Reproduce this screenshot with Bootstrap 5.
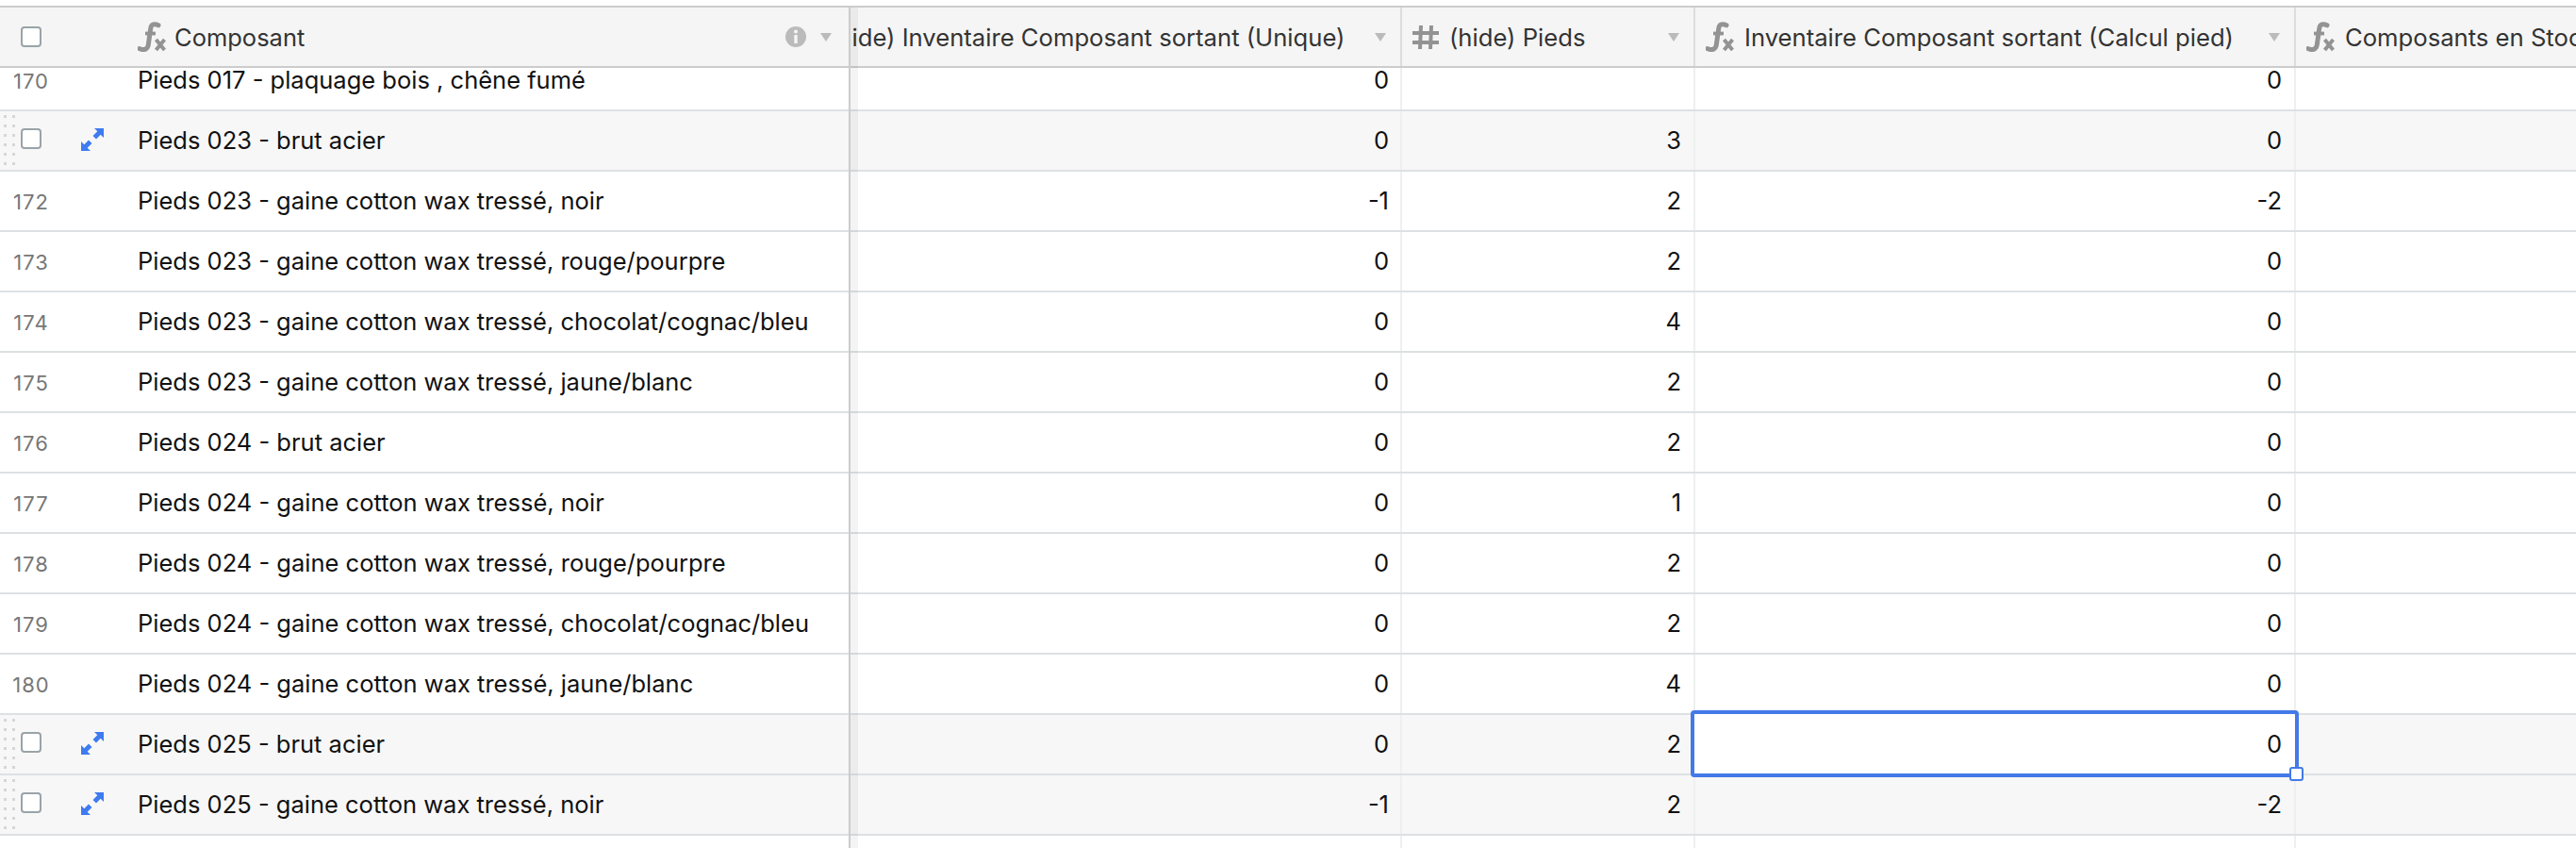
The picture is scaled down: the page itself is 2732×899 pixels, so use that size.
<!DOCTYPE html>
<html lang="fr">
<head>
<meta charset="utf-8">
<title>Composants</title>
<link rel="stylesheet" href="https://cdn.jsdelivr.net/npm/bootstrap@5.3.0/dist/css/bootstrap.min.css">
<style>
html,body{height:100%;margin:0;background:#fff;overflow:hidden}
body{font-family:Inter,"Liberation Sans",sans-serif;font-size:25.5px;color:#111}
.gt-root{height:899px;padding-top:6px}
.gt-left{width:902px;border-right:2px solid #ccc;z-index:3}
.gt-left::after{content:"";position:absolute;left:100%;top:2px;bottom:0;width:8px;background:rgba(0,0,0,.045);margin-left:2px}
.gt-right{width:1830px}
.gt-right .gt-head{font-size:25.65px}
.gt-head{height:66px;background:#f5f5f5;border-top:2px solid #ccc;border-bottom:2px solid #ccc;color:#333;white-space:nowrap}
.gt-scroll{height:827px}
.gt-row{height:64px;border-bottom:2px solid #dde1e3;white-space:nowrap}
.gt-row:first-child{margin-top:-18px}
.gt-hot{background:#f7f7f7}
.gt-num{width:66px;color:#777;font-size:22px;letter-spacing:1px;padding-top:2px}
.gt-exp{width:64px}
.gt-label{padding-left:16px;padding-top:1px}
.gt-head .gt-label{padding-top:0}
.gt-head .gt-num{padding-top:0}
.gt-head span{padding-top:3px}
.gt-drag{position:absolute;left:4px;top:4px}
.gt-left .form-check-input{width:22px;height:22px;margin:0;border:2px solid #9aa3a8;border-radius:4px;background-color:#fff}
.gt-hot .form-check-input{margin-bottom:6px}
.gt-hot .gt-exp svg{margin-bottom:2px}
.gt-inner{margin-left:-35px}
.gt-a{width:620px}.gt-b{width:311px}.gt-c{width:637px}.gt-d{width:400px}
.gt-cell{border-right:2px solid #eef0f0;padding-right:13px;padding-top:1px;height:100%}
.gt-a.gt-cell{padding-right:12px}
.gt-hcell{border-right:2px solid #ddd;padding-left:11px;padding-right:15px;height:100%}
.gt-a.gt-hcell{padding-left:12px}
.gt-d.gt-hcell,.gt-d.gt-cell{border-right:0}
.gt-text{padding-left:11px}
.gt-left .gt-text{padding-left:9px}
.gt-caret{margin-left:auto}
.gt-sel{position:absolute;left:-5px;right:-5px;top:-5px;bottom:-4px;border:4px solid #4379e8;border-radius:4px;background:#fff;padding-right:14px;padding-top:1px}
.gt-handle{position:absolute;right:-9px;bottom:-8px;width:15px;height:15px;background:#fff;border:2px solid #4379e8;border-radius:3px}
.gt-sel-cell{z-index:2}
</style>
</head>
<body>
<div class="gt-root d-flex overflow-hidden">

  <div class="gt-left position-relative flex-shrink-0">
    <div class="gt-head d-flex align-items-center">
      <div class="gt-num d-flex justify-content-center flex-shrink-0"><input class="form-check-input" type="checkbox" aria-label="Tout"></div>
      <div class="gt-exp flex-shrink-0"></div>
      <div class="gt-label d-flex align-items-center flex-grow-1">
        <svg width="30" height="32" viewBox="0 0 30 32" fill="none" stroke="#939393"><path d="M22 3.800C17 1.500 14.300 3 13.700 7.500L11.300 24.500C10.700 29 7 31 1.800 28.500" stroke-width="5" stroke-linecap="round"/><path d="M8 12.500H19" stroke-width="3.800"/><path d="M19.500 19L28.500 30M28.500 19L19.500 30" stroke-width="4"/></svg>
        <span class="gt-text">Composant</span>
        <svg class="gt-caret" width="22" height="22" viewBox="0 0 22 22"><circle cx="11" cy="11" r="11" fill="#bbb"/><circle cx="11" cy="5.500" r="2" fill="#f5f5f5"/><rect x="9.300" y="9" width="3.400" height="9" fill="#f5f5f5"/></svg>
        <svg class="gt-drop" width="12" height="9" viewBox="0 0 12 9" style="margin:0 18px 0 15px"><path d="M0 0H12L6 9Z" fill="#bbb"/></svg>
      </div>
    </div>
    <div class="gt-scroll overflow-hidden">
      <div class="gt-row d-flex align-items-center"><div class="gt-num text-center">170</div><div class="gt-exp"></div><div class="gt-label">Pieds 017 - plaquage bois , chêne fumé</div></div>
      <div class="gt-row gt-hot d-flex align-items-center position-relative">
        <svg class="gt-drag" width="12" height="53" viewBox="0 0 12 53" fill="#d6d6d6"><path d="M0 0h3v3H0zM9 0h3v3H9zM0 10h3v3H0zM9 10h3v3H9zM0 20h3v3H0zM9 20h3v3H9zM0 30h3v3H0zM9 30h3v3H9zM0 40h3v3H0zM9 40h3v3H9zM0 50h3v3H0zM9 50h3v3H9z"/></svg>
        <div class="gt-num d-flex justify-content-center"><input class="form-check-input" type="checkbox" aria-label="171"></div>
        <div class="gt-exp d-flex justify-content-center"><svg width="24" height="24" viewBox="0 0 24 24" fill="#3f7bf0"><path d="M24 0L24 10L20.700 6.700L16 11.500L12.500 8L17.300 3.300L14 0ZM0 24L0 14L3.300 17.300L8 12.500L11.500 16L6.700 20.700L10 24Z"/></svg></div>
        <div class="gt-label">Pieds 023 - brut acier</div>
      </div>
      <div class="gt-row d-flex align-items-center"><div class="gt-num text-center">172</div><div class="gt-exp"></div><div class="gt-label">Pieds 023 - gaine cotton wax tressé, noir</div></div>
      <div class="gt-row d-flex align-items-center"><div class="gt-num text-center">173</div><div class="gt-exp"></div><div class="gt-label">Pieds 023 - gaine cotton wax tressé, rouge/pourpre</div></div>
      <div class="gt-row d-flex align-items-center"><div class="gt-num text-center">174</div><div class="gt-exp"></div><div class="gt-label">Pieds 023 - gaine cotton wax tressé, chocolat/cognac/bleu</div></div>
      <div class="gt-row d-flex align-items-center"><div class="gt-num text-center">175</div><div class="gt-exp"></div><div class="gt-label">Pieds 023 - gaine cotton wax tressé, jaune/blanc</div></div>
      <div class="gt-row d-flex align-items-center"><div class="gt-num text-center">176</div><div class="gt-exp"></div><div class="gt-label">Pieds 024 - brut acier</div></div>
      <div class="gt-row d-flex align-items-center"><div class="gt-num text-center">177</div><div class="gt-exp"></div><div class="gt-label">Pieds 024 - gaine cotton wax tressé, noir</div></div>
      <div class="gt-row d-flex align-items-center"><div class="gt-num text-center">178</div><div class="gt-exp"></div><div class="gt-label">Pieds 024 - gaine cotton wax tressé, rouge/pourpre</div></div>
      <div class="gt-row d-flex align-items-center"><div class="gt-num text-center">179</div><div class="gt-exp"></div><div class="gt-label">Pieds 024 - gaine cotton wax tressé, chocolat/cognac/bleu</div></div>
      <div class="gt-row d-flex align-items-center"><div class="gt-num text-center">180</div><div class="gt-exp"></div><div class="gt-label">Pieds 024 - gaine cotton wax tressé, jaune/blanc</div></div>
      <div class="gt-row gt-hot d-flex align-items-center position-relative">
        <svg class="gt-drag" width="12" height="53" viewBox="0 0 12 53" fill="#d6d6d6"><path d="M0 0h3v3H0zM9 0h3v3H9zM0 10h3v3H0zM9 10h3v3H9zM0 20h3v3H0zM9 20h3v3H9zM0 30h3v3H0zM9 30h3v3H9zM0 40h3v3H0zM9 40h3v3H9zM0 50h3v3H0zM9 50h3v3H9z"/></svg>
        <div class="gt-num d-flex justify-content-center"><input class="form-check-input" type="checkbox" aria-label="181"></div>
        <div class="gt-exp d-flex justify-content-center"><svg width="24" height="24" viewBox="0 0 24 24" fill="#3f7bf0"><path d="M24 0L24 10L20.700 6.700L16 11.500L12.500 8L17.300 3.300L14 0ZM0 24L0 14L3.300 17.300L8 12.500L11.500 16L6.700 20.700L10 24Z"/></svg></div>
        <div class="gt-label">Pieds 025 - brut acier</div>
      </div>
      <div class="gt-row gt-hot d-flex align-items-center position-relative">
        <svg class="gt-drag" width="12" height="53" viewBox="0 0 12 53" fill="#d6d6d6"><path d="M0 0h3v3H0zM9 0h3v3H9zM0 10h3v3H0zM9 10h3v3H9zM0 20h3v3H0zM9 20h3v3H9zM0 30h3v3H0zM9 30h3v3H9zM0 40h3v3H0zM9 40h3v3H9zM0 50h3v3H0zM9 50h3v3H9z"/></svg>
        <div class="gt-num d-flex justify-content-center"><input class="form-check-input" type="checkbox" aria-label="182"></div>
        <div class="gt-exp d-flex justify-content-center"><svg width="24" height="24" viewBox="0 0 24 24" fill="#3f7bf0"><path d="M24 0L24 10L20.700 6.700L16 11.500L12.500 8L17.300 3.300L14 0ZM0 24L0 14L3.300 17.300L8 12.500L11.500 16L6.700 20.700L10 24Z"/></svg></div>
        <div class="gt-label">Pieds 025 - gaine cotton wax tressé, noir</div>
      </div>
      <div class="gt-row d-flex border-0">
        <div class="gt-num"></div>
      </div>
    </div>
  </div>

  <div class="gt-right overflow-hidden flex-shrink-0">
    <div class="gt-head d-flex align-items-center">
      <div class="gt-inner d-flex h-100 flex-shrink-0">
        <div class="gt-a gt-hcell d-flex align-items-center flex-shrink-0"><span>(hide) Inventaire Composant sortant (Unique)</span><svg class="gt-caret" width="12" height="9" viewBox="0 0 12 9"><path d="M0 0H12L6 9Z" fill="#bbb"/></svg></div>
        <div class="gt-b gt-hcell d-flex align-items-center flex-shrink-0">
          <svg width="28" height="27" viewBox="0 0 28 27" fill="none" stroke="#939393" stroke-width="4"><path d="M9 1L8 26M20 1L19 26M0 9H28M0 19H28"/></svg>
          <span class="gt-text">(hide) Pieds</span><svg class="gt-caret" width="12" height="9" viewBox="0 0 12 9"><path d="M0 0H12L6 9Z" fill="#bbb"/></svg></div>
        <div class="gt-c gt-hcell d-flex align-items-center flex-shrink-0">
          <svg width="30" height="32" viewBox="0 0 30 32" fill="none" stroke="#939393"><path d="M22 3.800C17 1.500 14.300 3 13.700 7.500L11.300 24.500C10.700 29 7 31 1.800 28.500" stroke-width="5" stroke-linecap="round"/><path d="M8 12.500H19" stroke-width="3.800"/><path d="M19.500 19L28.500 30M28.500 19L19.500 30" stroke-width="4"/></svg>
          <span class="gt-text">Inventaire Composant sortant (Calcul pied)</span><svg class="gt-caret" width="12" height="9" viewBox="0 0 12 9"><path d="M0 0H12L6 9Z" fill="#bbb"/></svg></div>
        <div class="gt-d gt-hcell d-flex align-items-center flex-shrink-0">
          <svg width="30" height="32" viewBox="0 0 30 32" fill="none" stroke="#939393"><path d="M22 3.800C17 1.500 14.300 3 13.700 7.500L11.300 24.500C10.700 29 7 31 1.800 28.500" stroke-width="5" stroke-linecap="round"/><path d="M8 12.500H19" stroke-width="3.800"/><path d="M19.500 19L28.500 30M28.500 19L19.500 30" stroke-width="4"/></svg>
          <span class="gt-text">Composants en Stock</span></div>
      </div>
    </div>
    <div class="gt-scroll overflow-hidden">
      <div class="gt-row gt-inner d-flex"><div class="gt-a gt-cell d-flex align-items-center justify-content-end flex-shrink-0">0</div><div class="gt-b gt-cell d-flex align-items-center justify-content-end flex-shrink-0"></div><div class="gt-c gt-cell d-flex align-items-center justify-content-end flex-shrink-0">0</div><div class="gt-d gt-cell flex-shrink-0"></div></div>
      <div class="gt-row gt-hot gt-inner d-flex"><div class="gt-a gt-cell d-flex align-items-center justify-content-end flex-shrink-0">0</div><div class="gt-b gt-cell d-flex align-items-center justify-content-end flex-shrink-0">3</div><div class="gt-c gt-cell d-flex align-items-center justify-content-end flex-shrink-0">0</div><div class="gt-d gt-cell flex-shrink-0"></div></div>
      <div class="gt-row gt-inner d-flex"><div class="gt-a gt-cell d-flex align-items-center justify-content-end flex-shrink-0">-1</div><div class="gt-b gt-cell d-flex align-items-center justify-content-end flex-shrink-0">2</div><div class="gt-c gt-cell d-flex align-items-center justify-content-end flex-shrink-0">-2</div><div class="gt-d gt-cell flex-shrink-0"></div></div>
      <div class="gt-row gt-inner d-flex"><div class="gt-a gt-cell d-flex align-items-center justify-content-end flex-shrink-0">0</div><div class="gt-b gt-cell d-flex align-items-center justify-content-end flex-shrink-0">2</div><div class="gt-c gt-cell d-flex align-items-center justify-content-end flex-shrink-0">0</div><div class="gt-d gt-cell flex-shrink-0"></div></div>
      <div class="gt-row gt-inner d-flex"><div class="gt-a gt-cell d-flex align-items-center justify-content-end flex-shrink-0">0</div><div class="gt-b gt-cell d-flex align-items-center justify-content-end flex-shrink-0">4</div><div class="gt-c gt-cell d-flex align-items-center justify-content-end flex-shrink-0">0</div><div class="gt-d gt-cell flex-shrink-0"></div></div>
      <div class="gt-row gt-inner d-flex"><div class="gt-a gt-cell d-flex align-items-center justify-content-end flex-shrink-0">0</div><div class="gt-b gt-cell d-flex align-items-center justify-content-end flex-shrink-0">2</div><div class="gt-c gt-cell d-flex align-items-center justify-content-end flex-shrink-0">0</div><div class="gt-d gt-cell flex-shrink-0"></div></div>
      <div class="gt-row gt-inner d-flex"><div class="gt-a gt-cell d-flex align-items-center justify-content-end flex-shrink-0">0</div><div class="gt-b gt-cell d-flex align-items-center justify-content-end flex-shrink-0">2</div><div class="gt-c gt-cell d-flex align-items-center justify-content-end flex-shrink-0">0</div><div class="gt-d gt-cell flex-shrink-0"></div></div>
      <div class="gt-row gt-inner d-flex"><div class="gt-a gt-cell d-flex align-items-center justify-content-end flex-shrink-0">0</div><div class="gt-b gt-cell d-flex align-items-center justify-content-end flex-shrink-0">1</div><div class="gt-c gt-cell d-flex align-items-center justify-content-end flex-shrink-0">0</div><div class="gt-d gt-cell flex-shrink-0"></div></div>
      <div class="gt-row gt-inner d-flex"><div class="gt-a gt-cell d-flex align-items-center justify-content-end flex-shrink-0">0</div><div class="gt-b gt-cell d-flex align-items-center justify-content-end flex-shrink-0">2</div><div class="gt-c gt-cell d-flex align-items-center justify-content-end flex-shrink-0">0</div><div class="gt-d gt-cell flex-shrink-0"></div></div>
      <div class="gt-row gt-inner d-flex"><div class="gt-a gt-cell d-flex align-items-center justify-content-end flex-shrink-0">0</div><div class="gt-b gt-cell d-flex align-items-center justify-content-end flex-shrink-0">2</div><div class="gt-c gt-cell d-flex align-items-center justify-content-end flex-shrink-0">0</div><div class="gt-d gt-cell flex-shrink-0"></div></div>
      <div class="gt-row gt-inner d-flex"><div class="gt-a gt-cell d-flex align-items-center justify-content-end flex-shrink-0">0</div><div class="gt-b gt-cell d-flex align-items-center justify-content-end flex-shrink-0">4</div><div class="gt-c gt-cell d-flex align-items-center justify-content-end flex-shrink-0">0</div><div class="gt-d gt-cell flex-shrink-0"></div></div>
      <div class="gt-row gt-hot gt-inner d-flex"><div class="gt-a gt-cell d-flex align-items-center justify-content-end flex-shrink-0">0</div><div class="gt-b gt-cell d-flex align-items-center justify-content-end flex-shrink-0">2</div><div class="gt-c gt-cell gt-sel-cell position-relative flex-shrink-0"><div class="gt-sel d-flex align-items-center justify-content-end">0<span class="gt-handle"></span></div></div><div class="gt-d gt-cell flex-shrink-0"></div></div>
      <div class="gt-row gt-hot gt-inner d-flex"><div class="gt-a gt-cell d-flex align-items-center justify-content-end flex-shrink-0">-1</div><div class="gt-b gt-cell d-flex align-items-center justify-content-end flex-shrink-0">2</div><div class="gt-c gt-cell d-flex align-items-center justify-content-end flex-shrink-0">-2</div><div class="gt-d gt-cell flex-shrink-0"></div></div>
      <div class="gt-row gt-inner d-flex border-0"><div class="gt-a gt-cell flex-shrink-0"></div><div class="gt-b gt-cell flex-shrink-0"></div><div class="gt-c gt-cell flex-shrink-0"></div><div class="gt-d gt-cell flex-shrink-0"></div></div>
    </div>
  </div>
</div>
</body>
</html>
